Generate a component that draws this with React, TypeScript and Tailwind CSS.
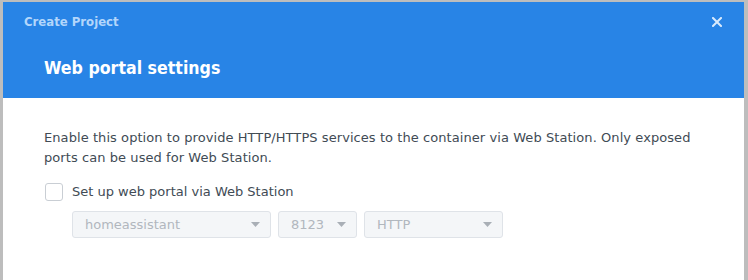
import React from "react";

function Caret() {
  return (
    <svg width="9" height="5" viewBox="0 0 9 5" className="shrink-0">
      <path d="M0 0 L9 0 L4.5 5 Z" fill="#a9afb6" />
    </svg>
  );
}

function Select({ value, w }: { value: string; w: string }) {
  return (
    <div
      className={`${w} h-[27px] rounded-[3px] border border-[#dfe3e8] bg-[#f4f6f8] flex items-center justify-between pl-3 pr-[10px] text-[13px] text-[#b1b7be]`}
    >
      <span>{value}</span>
      <Caret />
    </div>
  );
}

export default function App() {
  return (
    <div className="w-[748px] h-[280px] bg-[#bdbdbd] pl-[3px] pt-[2px] pr-[4px] overflow-hidden">
      <div className="w-full h-full bg-white flex flex-col" style={{ fontFamily: "'DejaVu Sans', Verdana, sans-serif" }}>
        <div className="h-[96px] bg-[#2884e6] flex flex-col">
          <div className="flex items-center justify-between pl-[21px] pr-[22px] h-[38px] pt-[1px]">
            <span
              className="text-[13px] font-bold text-[#b3d6fb]"
              style={{ fontFamily: "'DejaVu Sans Condensed', 'DejaVu Sans', sans-serif" }}
            >
              Create Project
            </span>
            <svg width="10" height="10" viewBox="0 0 10 10">
              <path d="M1 1 L9 9 M9 1 L1 9" stroke="#d9eafc" strokeWidth="2" strokeLinecap="square" />
            </svg>
          </div>
          <div
            className="pl-[41px] pt-[15px] text-[17.6px] font-bold text-white"
            style={{ fontFamily: "'DejaVu Sans Condensed', 'DejaVu Sans', sans-serif" }}
          >
            Web portal settings
          </div>
        </div>
        <div className="pl-[41px] pr-[30px] pt-[30px] text-[13px] leading-[20px] text-[#414b55]">
          <p className="tracking-[0.07px]">
            Enable this option to provide HTTP/HTTPS services to the container via Web Station. Only exposed ports can be used for Web Station.
          </p>
          <div className="flex items-center mt-[14px] h-[20px]">
            <div className="w-[18px] h-[18px] rounded-[3px] border border-[#c9ced4] bg-white ml-[1px]" />
            <span className="ml-[9px]">Set up web portal via Web Station</span>
          </div>
          <div className="flex gap-[7px] ml-[28px] mt-[9px]">
            <Select value="homeassistant" w="w-[199px]" />
            <Select value="8123" w="w-[79px]" />
            <Select value="HTTP" w="w-[139px]" />
          </div>
        </div>
      </div>
    </div>
  );
}
